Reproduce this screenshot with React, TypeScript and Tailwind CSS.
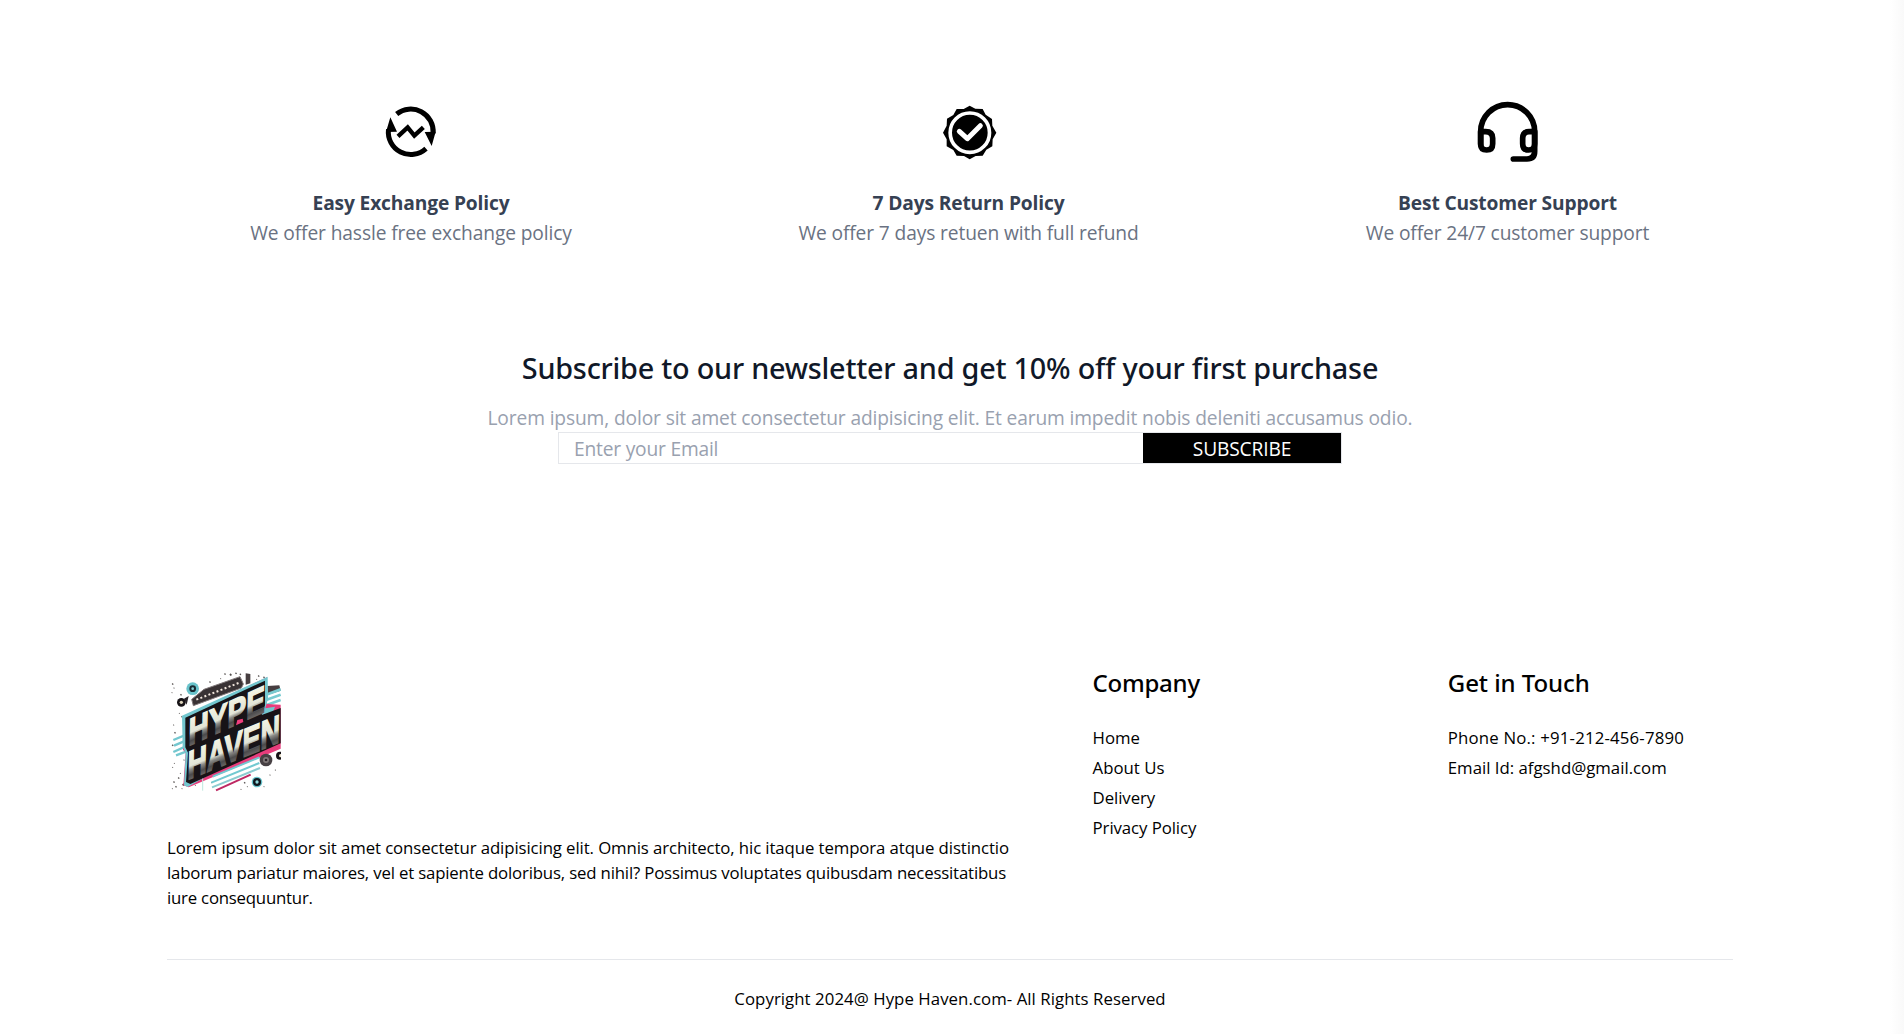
import type { ReactNode } from 'react';

function ExchangeIcon() {
  return (
    <svg viewBox="0 0 240 240" className="-mt-3 -ml-[11.5px] size-20" fill="none" stroke="#000">
      <path d="M80 72 A67.500 67.500 0 0 1 189.500 130" strokeWidth="15" />
      <path d="M168 176 A67.500 67.500 0 0 1 55.500 118" strokeWidth="15" />
      <path d="M61 82 L81 125 L48 126 Z M164 126 L197 125 L185 168 Z" fill="#000" stroke="none" />
      <path d="M84 139 L113 112 L133 137 L160 112" strokeWidth="13" />
    </svg>
  );
}

function ReturnIcon() {
  return (
    <svg viewBox="0 0 240 240" className="-mt-3 -ml-[9px] size-20">
      <path
        d="M119 47 L136 56 L158 57 L167 74 L186 87 L187 107 L199 128 L188 148 L187 169 L169 179 L158 197 L137 198 L119 208 L102 198 L80 197 L70 180 L50 169 L50 148 L39 128 L50 107 L51 86 L70 75 L80 57 L101 57 Z"
        fill="#000"
      />
      <circle cx="119.500" cy="128" r="59" fill="none" stroke="#fff" strokeWidth="11" />
      <path d="M88 124 L112 146 L151 107" fill="none" stroke="#fff" strokeWidth="15" strokeLinecap="round" strokeLinejoin="round" />
    </svg>
  );
}

function SupportIcon() {
  return (
    <svg viewBox="0 0 240 240" className="-mt-3 -ml-[13px] size-20" fill="none" stroke="#000" strokeWidth="17" strokeLinecap="round" strokeLinejoin="round">
      <path d="M47 164 V125 A81 81 0 0 1 209 125 V184 Q209 207 186 207 H145" />
      <path d="M47 125 H62 Q83 125 83 145 V161 Q83 180 65 180 Q47 180 47 161 Z" />
      <path d="M209 125 H192 Q173 125 173 145 V161 Q173 180 191 180 Q209 180 209 161 Z" />
    </svg>
  );
}

const specks = [
  [38, 72, 3], [42, 84, 2], [36, 98, 2], [63, 104, 3], [58, 160, 2], [66, 170, 3], [41, 195, 2], [195, 42, 3],
  [212, 44, 4], [228, 40, 3], [241, 43, 3], [182, 56, 2], [150, 66, 3], [296, 48, 3], [312, 52, 3], [290, 58, 2],
  [45, 218, 3], [38, 256, 3], [43, 310, 2], [38, 322, 2], [61, 340, 2], [56, 354, 3], [42, 366, 3], [48, 380, 3],
  [37, 386, 2], [70, 374, 4], [66, 386, 2], [106, 376, 2], [155, 368, 2], [254, 368, 3], [330, 345, 2], [346, 330, 2],
  [312, 380, 2], [336, 268, 3], [354, 262, 3], [72, 300, 2], [243, 388, 2], [262, 380, 2],
];

function Logo() {
  return (
    <svg viewBox="21 15 341 390" className="h-[130px] w-[113.7px]">
      <defs>
        <linearGradient id="steel" x1="0" y1="0" x2="0" y2="1">
          <stop offset="0.15" stopColor="#f4f5e6" />
          <stop offset="0.52" stopColor="#e3e5d6" />
          <stop offset="0.6" stopColor="#8b8b87" />
          <stop offset="0.72" stopColor="#4b4a4b" />
          <stop offset="0.9" stopColor="#777574" />
        </linearGradient>
      </defs>
      {specks.map(([x, y, r]) => (
        <path key={`${x}-${y}`} d={`M${x - r} ${y} l${r} ${-r} l${r} ${r + 1} l${-r} ${r - 1} Z`} fill="#55504f" />
      ))}
      <path d="M95 118 L132 88 L240 50 L250 72 L244 84 L100 137 Z" fill="#393234" stroke="#81797a" strokeWidth="3" />
      <path d="M109 119 L238 68" stroke="#f1e6dc" strokeWidth="6" strokeDasharray="6 7" />
      <path d="M257 40 L271 42 V70 L257 74 Z M322 78 L358 76 L362 92 L324 104 Z" fill="#473e40" />
      <path d="M316 105 L362 88 M318 120 L362 104 M320 135 L362 120" stroke="#79cbd1" strokeWidth="8" />
      <path d="M40 240 L88 220 M42 257 L86 238 M40 276 L84 256 M48 286 L80 274" stroke="#73c7cf" strokeWidth="7" />
      <path d="M69 169 L321 52 L320 132 L362 134 V266 L86 382 L70 376 L77 277 L69 270 Z" fill="#e83d7c" />
      <path d="M66 167 L323 50 L324 116 L316 145 L345 140 L300 260 L83 381 L72 376 L77 280 L68 260 Z" fill="#73c7cf" />
      <path d="M76 173 L315 62 L315 136 L305 165 L362 144 V250 L91 372 L78 366 L84 278 L76 262 Z" fill="#171317" />
      <path d="M228 196 L250 186 L248 176 L232 180 Z" fill="#ef3e7d" />
      <g fontFamily="Liberation Sans" fontWeight="700" fill="url(#steel)" stroke="url(#steel)" strokeWidth="5">
        <text transform="matrix(1 -0.45 -0.02 1 85 258)" x="0" y="0" fontSize="114" textLength="229" lengthAdjust="spacingAndGlyphs">
          HYPE
        </text>
        <text transform="matrix(1 -0.41 -0.02 1 82 360)" x="0" y="0" fontSize="120" textLength="277" lengthAdjust="spacingAndGlyphs">
          HAVEN
        </text>
      </g>
      <path d="M158 350 L298 292 M154 368 L298 309" stroke="#72c9d1" strokeWidth="6" />
      <path d="M156 382 L300 324" stroke="#8bcbd0" strokeWidth="6" />
      <path d="M168 391 L272 344" stroke="#be2863" strokeWidth="6" />
      <path d="M128 356 V392" stroke="#bde7dd" strokeWidth="3" />
      <circle cx="98" cy="86" r="19" fill="#69c3cb" />
      <circle cx="98" cy="86" r="10" fill="#182a32" />
      <circle cx="98" cy="86" r="4" fill="#81ced3" />
      <path d="M72 116 L86 108 L80 134 Z" fill="#292329" />
      <circle cx="64" cy="127" r="13" fill="#171317" />
      <circle cx="64" cy="127" r="5" fill="#ddd4bc" />
      <circle cx="318" cy="300" r="19" fill="#474144" />
      <circle cx="318" cy="300" r="9" fill="#807979" />
      <circle cx="318" cy="300" r="4" fill="#282126" />
      <circle cx="291" cy="366" r="16" fill="#69c3cb" />
      <circle cx="291" cy="366" r="12" fill="#10171e" />
      <circle cx="291" cy="366" r="5" fill="#91dadd" />
      <circle cx="360" cy="287" r="12" fill="#171317" />
      <circle cx="362" cy="287" r="5" fill="#eee6d1" />
    </svg>
  );
}

function Feature({ icon, title, children, className }: { icon: ReactNode; title: string; children: ReactNode; className: string }) {
  return (
    <div className={`flex flex-col items-center whitespace-nowrap text-[19.2px] leading-[30px] ${className}`}>
      <div className="mb-[26px] size-[60px]">{icon}</div>
      <p className="font-bold tracking-[-0.15px] text-gray-700">{title}</p>
      <p className="tracking-[-0.12px] text-gray-500">{children}</p>
    </div>
  );
}

export default function App() {
  return (
    <div className="flex h-[1034px] justify-between overflow-hidden bg-white pl-[167px] font-['Open_Sans',sans-serif] text-black">
      <div className="w-[1566px]">
        <section className="flex justify-around gap-[60px] pt-[102px]">
          <Feature icon={<ExchangeIcon />} title="Easy Exchange Policy" className="w-[322px]">
            We offer hassle free exchange policy
          </Feature>
          <Feature icon={<ReturnIcon />} title="7 Days Return Policy" className="w-[341px]">
            We offer 7 days retuen with full refund
          </Feature>
          <Feature icon={<SupportIcon />} title="Best Customer Support" className="w-[285px]">
            We offer 24/7 customer support
          </Feature>
        </section>

        <section className="mt-[100px] flex flex-col items-center whitespace-nowrap text-[19.2px]">
          <h2 className="font-['Noto_Sans',sans-serif] text-[28.8px] leading-10 font-medium tracking-[-0.22px] text-gray-900">
            Subscribe to our newsletter and get 10% off your first purchase
          </h2>
          <p className="mt-[15px] mb-[-1px] leading-[30px] tracking-[-0.13px] text-gray-400">
            Lorem ipsum, dolor sit amet consectetur adipisicing elit. Et earum impedit nobis deleniti accusamus odio.
          </p>
          <form className="flex h-8 w-[784px] border border-gray-200">
            <input
              type="email"
              placeholder="Enter your Email"
              className="min-w-0 flex-1 pt-0.5 pl-[15px] tracking-[-0.2px] outline-none placeholder:text-gray-400"
            />
            <button type="button" className="w-[198px] bg-black pt-0.5 leading-7 tracking-[-0.15px] text-white">
              SUBSCRIBE
            </button>
          </form>
        </section>

        <footer className="mt-[201px] text-[16.8px] leading-[25px] whitespace-nowrap">
          <div className="grid grid-cols-[3fr_1fr_1fr] gap-[70px]">
            <div className="min-w-0">
              <Logo />
              <p className="mt-10">
                <span className="block tracking-[-0.1px]">
                  Lorem ipsum dolor sit amet consectetur adipisicing elit. Omnis architecto, hic itaque tempora atque distinctio
                </span>
                <span className="block tracking-[-0.17px]">
                  laborum pariatur maiores, vel et sapiente doloribus, sed nihil? Possimus voluptates quibusdam necessitatibus
                </span>
                <span className="block tracking-[-0.22px]">iure consequuntur.</span>
              </p>
            </div>
            <div>
              <h3 className="mb-[25px] font-['Noto_Sans',sans-serif] text-[24px] leading-[35px] font-medium tracking-[-0.25px]">Company</h3>
              <ul className="flex flex-col gap-[5px]">
                <li>Home</li>
                <li>About Us</li>
                <li className="tracking-[-0.08px]">Delivery</li>
                <li className="tracking-[-0.08px]">Privacy Policy</li>
              </ul>
            </div>
            <div>
              <h3 className="mb-[25px] font-['Noto_Sans',sans-serif] text-[24px] leading-[35px] font-medium tracking-[-0.08px]">Get in Touch</h3>
              <ul className="flex flex-col gap-[5px]">
                <li className="tracking-[0.18px]">Phone No.: +91-212-456-7890</li>
                <li>Email Id: afgshd@gmail.com</li>
              </ul>
            </div>
          </div>
          <hr className="mt-[49px] border-gray-200" />
          <p className="pt-[26px] text-center tracking-[0.06px]">Copyright 2024@ Hype Haven.com- All Rights Reserved</p>
        </footer>
      </div>
      <div className="w-3.5 bg-linear-to-r from-white to-[#f9f9f9]" />
    </div>
  );
}
